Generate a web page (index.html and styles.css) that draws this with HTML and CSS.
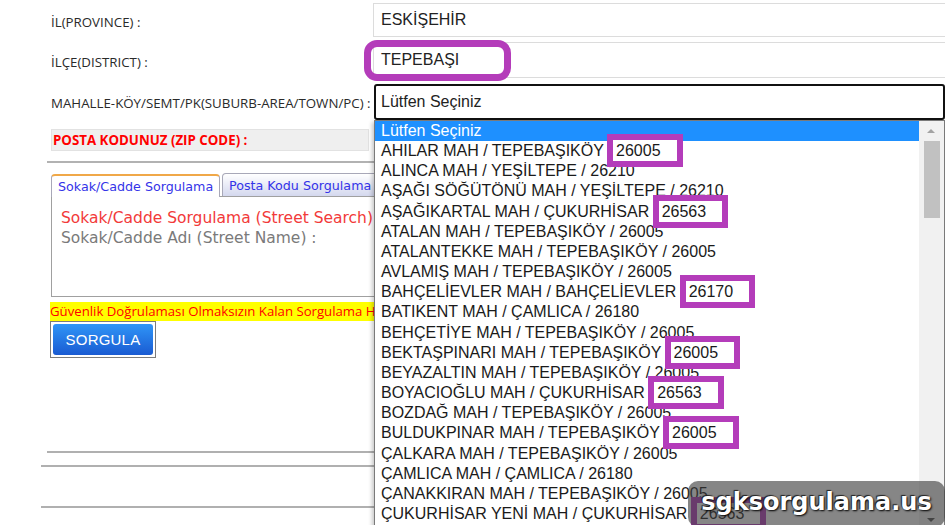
FILE: index.html
```html
<!DOCTYPE html>
<html lang="tr">
<head>
<meta charset="utf-8">
<title>Posta Kodu Sorgulama</title>
<link rel="stylesheet" href="styles.css">
</head>
<body>
<div class="page">
  <div class="form">
    <div class="row r1">
      <div class="label">İL(PROVINCE) :</div>
      <div class="field"><div class="input">ESKİŞEHİR</div></div>
    </div>
    <div class="row r2">
      <div class="label">İLÇE(DISTRICT) :</div>
      <div class="field"><div class="input">TEPEBAŞI</div><span class="mark-district"></span></div>
    </div>
    <div class="row r3">
      <div class="label">MAHALLE-KÖY/SEMT/PK(SUBURB-AREA/TOWN/PC) :</div>
      <div class="field"><div class="select">Lütfen Seçiniz</div></div>
    </div>
    <div class="zip-row">POSTA KODUNUZ (ZIP CODE) :</div>
  </div>
  <div class="sep"></div>
  <div class="tabs-area">
    <div class="tabs">
      <div class="tab active">Sokak/Cadde Sorgulama</div>
      <div class="tab">Posta Kodu Sorgulama</div>
    </div>
    <div class="panel">
      <div class="panel-title">Sokak/Cadde Sorgulama (Street Search)</div>
      <div class="panel-sub">Sokak/Cadde Adı (Street Name) :</div>
    </div>
  </div>
  <div class="warning">Güvenlik Doğrulaması Olmaksızın Kalan Sorgulama Hakkınız</div>
  <div class="btn-wrap"><div class="btn">SORGULA</div></div>
  <div class="bottom-lines">
    <div class="line l1"></div>
    <div class="line l2"></div>
    <div class="line l3"></div>
  </div>

  <div class="dropdown">
    <ul class="options">
      <li class="selected">Lütfen Seçiniz</li>
      <li>AHILAR MAH / TEPEBAŞIKÖY <span class="zip">26005</span></li>
      <li>ALINCA MAH / YEŞİLTEPE / 26210</li>
      <li>AŞAĞI SÖĞÜTÖNÜ MAH / YEŞİLTEPE / 26210</li>
      <li>AŞAĞIKARTAL MAH / ÇUKURHİSAR <span class="zip">26563</span></li>
      <li>ATALAN MAH / TEPEBAŞIKÖY / 26005</li>
      <li>ATALANTEKKE MAH / TEPEBAŞIKÖY / 26005</li>
      <li>AVLAMIŞ MAH / TEPEBAŞIKÖY / 26005</li>
      <li>BAHÇELİEVLER MAH / BAHÇELİEVLER <span class="zip">26170</span></li>
      <li>BATIKENT MAH / ÇAMLICA / 26180</li>
      <li>BEHÇETİYE MAH / TEPEBAŞIKÖY / 26005</li>
      <li>BEKTAŞPINARI MAH / TEPEBAŞIKÖY <span class="zip">26005</span></li>
      <li>BEYAZALTIN MAH / TEPEBAŞIKÖY / 26005</li>
      <li>BOYACIOĞLU MAH / ÇUKURHİSAR <span class="zip">26563</span></li>
      <li>BOZDAĞ MAH / TEPEBAŞIKÖY / 26005</li>
      <li>BULDUKPINAR MAH / TEPEBAŞIKÖY <span class="zip">26005</span></li>
      <li>ÇALKARA MAH / TEPEBAŞIKÖY / 26005</li>
      <li>ÇAMLICA MAH / ÇAMLICA / 26180</li>
      <li>ÇANAKKIRAN MAH / TEPEBAŞIKÖY / 26005</li>
      <li>ÇUKURHİSAR YENİ MAH / ÇUKURHİSAR <span class="zip">26563</span></li>
    </ul>
    <div class="scrollbar">
      <span class="arrow up"></span>
      <span class="thumb"></span>
      <span class="arrow down"></span>
    </div>
  </div>

  <div class="watermark">sgksorgulama.us</div>
</div>
</body>
</html>
```

FILE: styles.css
```css
* { box-sizing: border-box; }
html, body {
  margin: 0;
  padding: 0;
  width: 945px;
  height: 525px;
  overflow: hidden;
  background: #fff;
}
body {
  font-family: "Open Sans", "Noto Sans", sans-serif;
  color: #222;
}
.page {
  position: relative;
  width: 945px;
  height: 525px;
  overflow: hidden;
}

/* ---------- form rows ---------- */
.form { padding-top: 3px; }
.row {
  display: grid;
  grid-template-columns: 322px 572px;
  padding-left: 51px;
  align-items: center;
}
.label {
  font-size: 13.3px;
  color: #2a2a2a;
  white-space: nowrap;
  padding-top: 3px;
}
.field { position: relative; }
.input {
  height: 34px;
  border: 1px solid #dcdcdc;
  border-right: 0;
  font: 16px "Liberation Sans", Arial, sans-serif;
  color: #222;
  padding-left: 7px;
  display: flex;
  align-items: center;
}
.r2 { margin-top: 5px; }
.r2 .input { height: 36px; }
.mark-district {
  position: absolute;
  left: -9px;
  top: -2px;
  width: 147px;
  height: 41px;
  border: 7px solid #b43cba;
  border-radius: 13px;
}
.r3 { margin-top: 6px; }
.r3 .label { padding-top: 1px; }
.select {
  height: 36px;
  margin-left: 1px;
  border: 2px solid #111;
  border-radius: 3px;
  font: 16px "Liberation Sans", Arial, sans-serif;
  color: #222;
  padding-left: 5px;
  display: flex;
  align-items: center;
}
.zip-row {
  margin: 9px 0 0 51px;
  width: 318px;
  height: 22px;
  background: #efefef;
  border: 1px solid #e2e2e2;
  color: #f00;
  font-weight: 700;
  font-size: 13.3px;
  display: flex;
  align-items: center;
  padding-left: 1px;
  white-space: nowrap;
}
.sep {
  margin: 10px 0 0 47px;
  width: 420px;
  height: 2px;
  background: #b2b2b2;
}

/* ---------- tabs ---------- */
.tabs-area {
  margin: 10px 0 0 51px;
  width: 460px;
  font-family: "DejaVu Sans", Verdana, sans-serif;
}
.tabs {
  display: flex;
  gap: 2px;
  align-items: flex-end;
}
.tab {
  height: 23px;
  padding: 0 6px;
  font-size: 12.7px;
  color: #3434e8;
  border: 1px solid #a8a8b8;
  border-bottom: 0;
  border-radius: 4px 4px 0 0;
  background: linear-gradient(#ffffff, #d4d8ee);
  display: flex;
  align-items: center;
  white-space: nowrap;
}
.tab.active {
  width: 169px;
  background: #fff;
  border-top: 2px solid #f0a848;
  position: relative;
  top: 1px;
}
.panel {
  height: 101px;
  border: 1px solid #a0a0a0;
  padding: 11px 0 0 9px;
  font-size: 15.5px;
  white-space: nowrap;
}
.panel-title { color: #f23a3a; line-height: 20px; }
.panel-sub { color: #7a7a7a; line-height: 20px; }

/* ---------- warning + button ---------- */
.warning {
  margin: 5px 0 0 50px;
  width: 420px;
  height: 19px;
  background: #ffff00;
  color: #f00;
  font-size: 13.2px;
  line-height: 19px;
  white-space: nowrap;
  overflow: hidden;
}
.btn-wrap {
  margin-left: 50px;
  width: 106px;
  height: 37px;
  border: 1px solid #7c7c7c;
  padding: 2px;
}
.btn {
  height: 100%;
  border-radius: 3px;
  background: linear-gradient(#2f95f7, #1a5bd2);
  color: #fff;
  font: 15px "Liberation Sans", Arial, sans-serif;
  display: flex;
  align-items: center;
  justify-content: center;
  letter-spacing: 0.2px;
}

/* ---------- bottom lines ---------- */
.bottom-lines { margin-top: 93px; }
.line { height: 2px; background: #b0b0b0; width: 420px; }
.l1 { margin-left: 47px; }
.l2 { margin: 12px 0 0 41px; }
.l3 { margin: 39px 0 0 41px; }

/* ---------- open dropdown ---------- */
.dropdown {
  position: absolute;
  z-index: 1;
  left: 374px;
  top: 120px;
  width: 571px;
  height: 410px;
  border: 1px solid #7a7a7a;
  background: #fff;
  box-shadow: -2px 2px 4px rgba(0, 0, 0, 0.22);
  display: flex;
}
.options {
  flex: 1;
  list-style: none;
  margin: 0;
  padding: 0;
  font: 16px "Liberation Sans", Arial, sans-serif;
  color: #1a1a1a;
  overflow: hidden;
}
.options li {
  height: 20.16px;
  line-height: 20.16px;
  padding-left: 6px;
  white-space: nowrap;
}
.options li.selected {
  background: #1e90ff;
  color: #fff;
}
.zip {
  position: relative;
  z-index: 1;
  display: inline-block;
  border: 6px solid #b43cba;
  background: #fff;
  line-height: 21px;
  padding: 0 16px 0 3px;
  margin: -7px 0 -7px -1px;
}
.scrollbar {
  width: 25px;
  background: #f1f1f1;
  position: relative;
}
.arrow {
  position: absolute;
  left: 8px;
  width: 0;
  height: 0;
  border-left: 4px solid transparent;
  border-right: 4px solid transparent;
}
.arrow.up { top: 8px; border-bottom: 4px solid #a3a3a3; }
.arrow.down { top: 397px; border-top: 4px solid #505050; }
.thumb {
  position: absolute;
  left: 5px;
  right: 4px;
  top: 20px;
  height: 77px;
  background: #c1c1c1;
}

/* ---------- watermark ---------- */
.watermark {
  position: absolute;
  z-index: 2;
  left: 688px;
  top: 481px;
  width: 257px;
  height: 46px;
  border-radius: 10px;
  background: rgba(60, 60, 60, 0.62);
  color: #fff;
  font: 700 24px "DejaVu Sans", Verdana, sans-serif;
  display: flex;
  align-items: center;
  justify-content: center;
  padding-bottom: 4px;
  text-shadow: 1px 1px 2px #000, -1px -1px 1px #222;
}
```
